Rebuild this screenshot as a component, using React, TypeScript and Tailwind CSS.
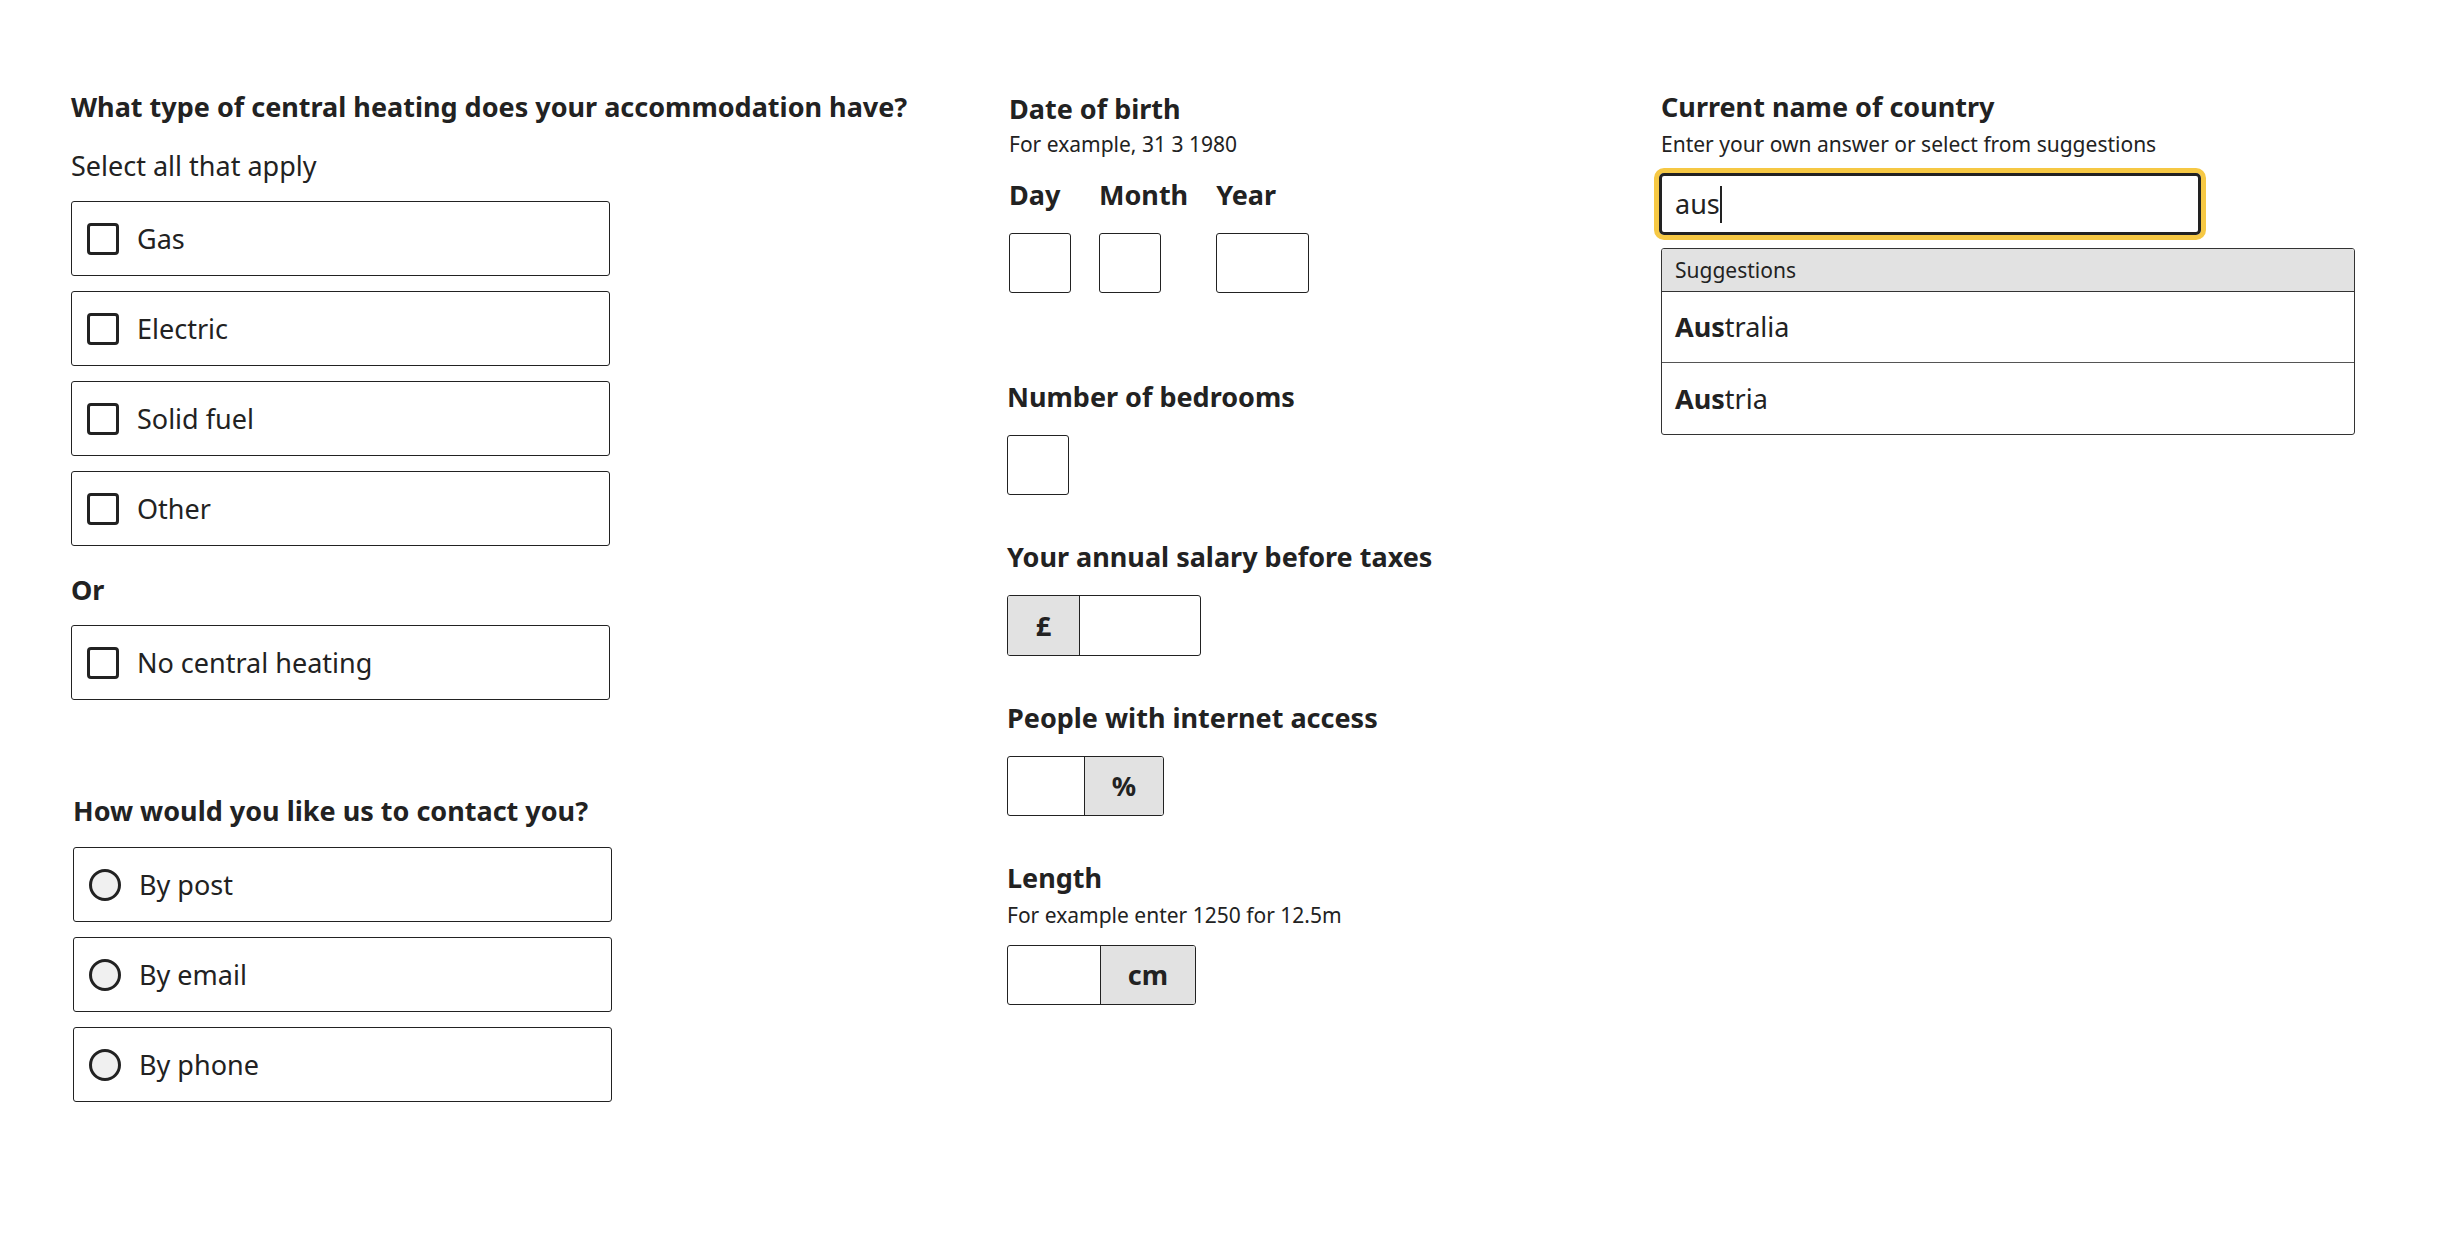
import React from 'react';

const checkboxOptions = ['Gas', 'Electric', 'Solid fuel', 'Other'];
const radioOptions = ['By post', 'By email', 'By phone'];

function CheckboxOption({ label }: { label: string }) {
  return (
    <div className="flex h-[75px] items-center rounded-[3px] border border-[#222] pl-[15px]">
      <span className="h-[32px] w-[32px] shrink-0 rounded-[4px] border-[3px] border-[#222] bg-white"></span>
      <span className="ml-[18px]">{label}</span>
    </div>
  );
}

function RadioOption({ label }: { label: string }) {
  return (
    <div className="flex h-[75px] items-center rounded-[3px] border border-[#222] pl-[15px]">
      <span className="h-[32px] w-[32px] shrink-0 rounded-full border-[3px] border-[#222] bg-[#f0f0f0]"></span>
      <span className="ml-[18px]">{label}</span>
    </div>
  );
}

function DateField({ label, width }: { label: string; width: string }) {
  return (
    <div className="flex flex-col items-start">
      <div className="font-bold">{label}</div>
      <div className={`mt-[19px] h-[60px] rounded-[3px] border border-[#222] ${width}`}></div>
    </div>
  );
}

function App() {
  return (
    <div className="min-h-screen bg-white pl-[71px] pt-[88px] font-['Noto_Sans',sans-serif] text-[27px] leading-[38px] text-[#222]">
      <div className="flex">
        {/* checkboxes and radios */}
        <div className="w-[936px] shrink-0">
          <div className="font-bold">What type of central heating does your accommodation have?</div>
          <div className="mt-[21px]">Select all that apply</div>
          <div className="mt-[16px] flex w-[539px] flex-col gap-[15px]">
            {checkboxOptions.map((o) => (
              <CheckboxOption key={o} label={o} />
            ))}
          </div>
          <div className="mt-[25px] font-bold">Or</div>
          <div className="mt-[16px] w-[539px]">
            <CheckboxOption label="No central heating" />
          </div>

          <div className="ml-[2px] mt-[92px]">
            <div className="font-bold">How would you like us to contact you?</div>
            <div className="mt-[17px] flex w-[539px] flex-col gap-[15px]">
              {radioOptions.map((o) => (
                <RadioOption key={o} label={o} />
              ))}
            </div>
          </div>
        </div>

        {/* inputs */}
        <div className="w-[654px] shrink-0">
          <div className="ml-[2px] pt-[2px]">
            <div className="font-bold">Date of birth</div>
            <div className="mt-[2px] text-[21px] leading-[28px]">For example, 31 3 1980</div>
            <div className="mt-[18px] flex gap-[28px]">
              <DateField label="Day" width="w-[62px]" />
              <DateField label="Month" width="w-[62px]" />
              <DateField label="Year" width="w-[93px]" />
            </div>
          </div>

          <div className="mt-[85px] font-bold">Number of bedrooms</div>
          <div className="mt-[19px] h-[60px] w-[62px] rounded-[3px] border border-[#222]"></div>

          <div className="mt-[43px] font-bold">Your annual salary before taxes</div>
          <div className="mt-[19px] flex h-[61px] w-[194px] overflow-hidden rounded-[3px] border border-[#222]">
            <div className="flex w-[72px] items-center justify-center border-r border-[#222] bg-[#e2e2e2] font-bold">£</div>
            <div className="flex-1"></div>
          </div>

          <div className="mt-[43px] font-bold">People with internet access</div>
          <div className="mt-[19px] flex h-[60px] w-[157px] overflow-hidden rounded-[3px] border border-[#222]">
            <div className="w-[77px] border-r border-[#222]"></div>
            <div className="flex flex-1 items-center justify-center bg-[#e2e2e2] font-bold">%</div>
          </div>

          <div className="mt-[43px] font-bold">Length</div>
          <div className="mt-[4px] text-[21px] leading-[28px]">For example enter 1250 for 12.5m</div>
          <div className="mt-[16px] flex h-[60px] w-[189px] overflow-hidden rounded-[3px] border border-[#222]">
            <div className="w-[93px] border-r border-[#222]"></div>
            <div className="flex flex-1 items-center justify-center bg-[#e2e2e2] font-bold">cm</div>
          </div>
        </div>

        {/* autosuggest */}
        <div className="flex-1">
          <div className="font-bold">Current name of country</div>
          <div className="mt-[4px] text-[21px] leading-[28px]">Enter your own answer or select from suggestions</div>
          <div className="-ml-[2px] mt-[15px] flex h-[62px] w-[542px] items-center rounded-[5px] border-[3px] border-[#222] pl-[13px] shadow-[0_0_0_5px_#f6c844]">
            <span>aus</span>
            <span className="h-[37px] w-[2px] bg-[#222]"></span>
          </div>
          <div className="mt-[13px] w-[694px] overflow-hidden rounded-[3px] border border-[#333]">
            <div className="h-[43px] border-b border-[#333] bg-[#e2e2e2] pl-[13px] pt-[7px] text-[21px] leading-[28px]">
              Suggestions
            </div>
            <div className="flex h-[71px] items-center border-b border-[#555] pl-[13px]">
              <span className="font-bold">Aus</span>
              <span>tralia</span>
            </div>
            <div className="flex h-[71px] items-center pl-[13px]">
              <span className="font-bold">Aus</span>
              <span>tria</span>
            </div>
          </div>
        </div>
      </div>
    </div>
  );
}

export default App;
